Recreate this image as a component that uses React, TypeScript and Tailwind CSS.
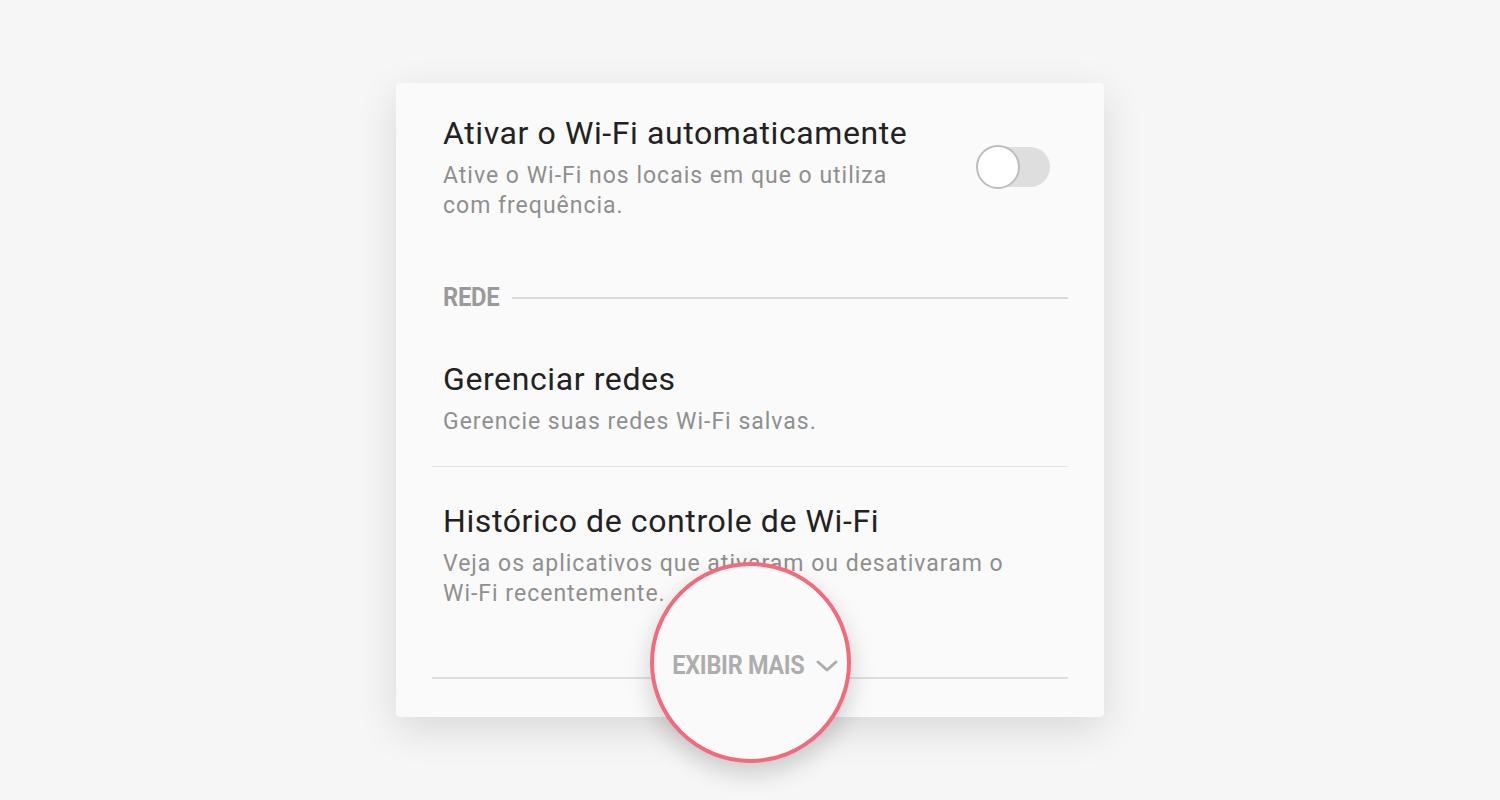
import React from "react";

const Toggle = () => (
  <div className="relative h-[40px] w-[74px] shrink-0">
    <div className="absolute inset-y-0 right-0 left-[2px] rounded-full bg-[#dedede]" />
    <div className="absolute left-0 top-[-2px] h-[44px] w-[44px] rounded-full border-2 border-[#bdbdbd] bg-white" />
  </div>
);

const Item = ({ title, sub }: { title: string; sub: React.ReactNode }) => (
  <div className="flex flex-col">
    <div className="text-[32px] leading-[40px] tracking-[0.6px] text-[#222]">{title}</div>
    <div className="mt-[8px] text-[23px] leading-[30px] tracking-[1px] text-[#8f8f8f]">{sub}</div>
  </div>
);

export default function App() {
  return (
    <div
      className="relative flex min-h-[800px] w-full justify-center bg-[#f6f6f6]"
      style={{ fontFamily: "Roboto, 'Liberation Sans', sans-serif" }}
    >
      <div className="mt-[83px] h-[634px] w-[708px] rounded-[4px] bg-[#fafafa] shadow-[0_12px_40px_rgba(0,0,0,0.12)]">
        <div className="flex items-center justify-between pl-[47px] pr-[54px] pt-[30px]">
          <Item
            title="Ativar o Wi-Fi automaticamente"
            sub={
              <>
                Ative o Wi-Fi nos locais em que o utiliza
                <br />
                com frequência.
              </>
            }
          />
          <Toggle />
        </div>

        <div className="mt-[62px] flex h-[30px] items-center pl-[47px] pr-[36px]">
          <span className="inline-block origin-left scale-x-[0.95] text-[25px] font-bold tracking-[-0.3px] text-[#9a9a9a]">
            REDE
          </span>
          <div className="ml-[10px] h-[2px] flex-1 bg-[#dadada]" />
        </div>

        <div className="mt-[46px] pl-[47px]">
          <Item title="Gerenciar redes" sub="Gerencie suas redes Wi-Fi salvas." />
        </div>
        <div className="mx-[36px] mt-[29px] h-px bg-[#e2e2e2]" />

        <div className="mt-[34px] pl-[47px]">
          <Item
            title="Histórico de controle de Wi-Fi"
            sub={
              <>
                Veja os aplicativos que ativaram ou desativaram o
                <br />
                Wi-Fi recentemente.
              </>
            }
          />
        </div>
        <div className="mx-[36px] mt-[68px] h-[2px] bg-[#dedede]" />
      </div>

      {/* magnifier over the "show more" button */}
      <div className="absolute left-[650px] top-[562px] flex h-[201px] w-[201px] items-center justify-center rounded-full border-[4px] border-[#f26a7c] bg-[#fafafa] shadow-[0_10px_25px_rgba(0,0,0,0.18)]">
        <div className="mt-[6px] flex items-center gap-[12px] pl-[2px]">
          <span className="inline-block scale-x-[0.9] text-[26px] font-bold tracking-[-0.3px] text-[#adadad]">
            EXIBIR MAIS
          </span>
          <svg width="22" height="14" viewBox="0 0 22 14" className="-ml-[8px]">
            <path d="M2 3 L11 11 L20 3" fill="none" stroke="#adadad" strokeWidth="3" strokeLinecap="round" strokeLinejoin="round" />
          </svg>
        </div>
      </div>
    </div>
  );
}
